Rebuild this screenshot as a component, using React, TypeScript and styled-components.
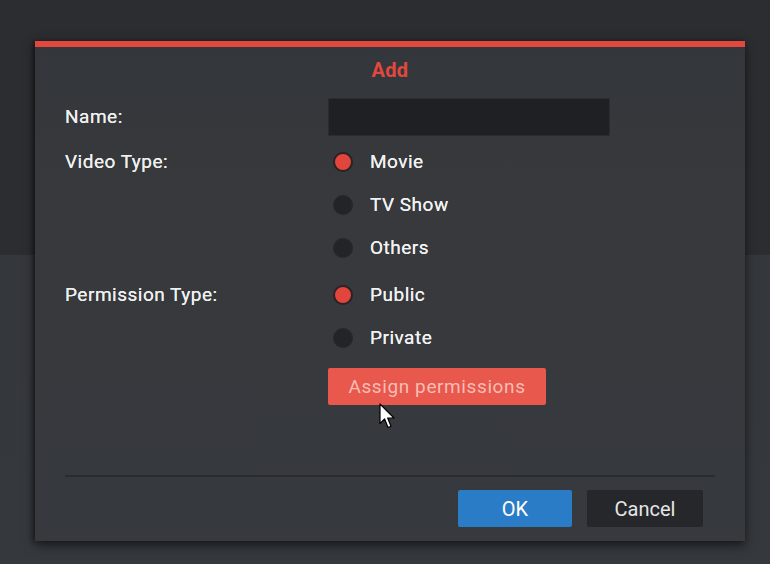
import styled, { createGlobalStyle } from "styled-components";

const GlobalStyle = createGlobalStyle`
  html, body {
    margin: 0;
    padding: 0;
    height: 100%;
  }
  body {
    font-family: Roboto, "Liberation Sans", sans-serif;
    background: linear-gradient(#2b2d31 0, #2b2d31 255px, #34373b 255px, #35383c 100%);
    overflow: hidden;
  }
`;

const Page = styled.div`
  width: 770px;
  height: 564px;
  padding: 41px 0 0 35px;
  box-sizing: border-box;
`;

const Dialog = styled.div`
  width: 710px;
  height: 500px;
  box-sizing: border-box;
  background: linear-gradient(#33363a, #37393d 30%, #36393d);
  border-top: 6px solid #e2483d;
  box-shadow: 0 4px 10px rgba(0, 0, 0, 0.55), -2px 0 4px rgba(0, 0, 0, 0.35);
  display: flex;
  flex-direction: column;
`;

const Title = styled.h2`
  margin: 0;
  height: 45px;
  display: flex;
  align-items: center;
  justify-content: center;
  font-size: 20px;
  font-weight: 700;
  color: #e2483d;
  letter-spacing: 0.3px;
`;

const Form = styled.div`
  display: grid;
  grid-template-columns: 263px 1fr;
  row-gap: 4px;
  padding: 6px 30px 0 30px;
`;

const Label = styled.div<{ $h: number }>`
  height: ${p => p.$h}px;
  line-height: ${p => p.$h}px;
  font-size: 19px;
  letter-spacing: 0.5px;
  color: #f0f0f0;
  text-shadow: 0 0 0.4px #f0f0f0;
`;

const Group = styled.div`
  display: flex;
  flex-direction: column;
`;

const TextInput = styled.input`
  width: 282px;
  height: 38px;
  box-sizing: border-box;
  margin: 0;
  background: #1f2023;
  border: 1px solid #2a2c2f;
  outline: none;
  color: #e8e8e8;
`;

const RadioRow = styled.label`
  height: 43px;
  display: flex;
  align-items: center;
  gap: 17px;
  padding-left: 5px;
  font-size: 19px;
  letter-spacing: 0.5px;
  color: #f2f2f2;
  text-shadow: 0 0 0.4px #f2f2f2;
`;

const Dot = styled.span<{ $on: boolean }>`
  width: 20px;
  height: 20px;
  border-radius: 50%;
  box-sizing: border-box;
  background: ${p => (p.$on ? "#e2453b" : "#222427")};
  border: 2px solid ${p => (p.$on ? "#2a2224" : "#24262a")};
`;

const ActionCell = styled.div`
  grid-column: 2;
  padding-top: 5px;
`;

const AssignButton = styled.button`
  position: relative;
  width: 218px;
  height: 37px;
  border: none;
  border-radius: 2px;
  background: #e8584c;
  color: #f6bdb4;
  font-family: inherit;
  font-size: 19px;
  letter-spacing: 0.6px;
  padding: 0;
`;

const Cursor = styled.svg`
  position: absolute;
  left: 51px;
  top: 35px;
`;

const Spacer = styled.div`
  flex: 1;
`;

const Footer = styled.div`
  margin: 0 30px;
  border-top: 2px solid #2a2c30;
  padding: 13px 12px 14px 0;
  display: flex;
  justify-content: flex-end;
  gap: 15px;
`;

const FooterButton = styled.button<{ $primary?: boolean }>`
  width: ${p => (p.$primary ? 114 : 116)}px;
  height: 37px;
  border: none;
  border-radius: 2px;
  background: ${p => (p.$primary ? "#2b7cc6" : "#25272a")};
  color: ${p => (p.$primary ? "#ffffff" : "#e6e6e6")};
  font-family: inherit;
  font-size: 20px;
  padding: 0;
`;

function Radio({ label, checked }: { label: string; checked?: boolean }) {
  return (
    <RadioRow>
      <Dot $on={!!checked} />
      {label}
    </RadioRow>
  );
}

export default function App() {
  return (
    <>
      <GlobalStyle />
      <Page>
        <Dialog>
          <Title>Add</Title>
          <Form>
            <Label $h={38}>Name:</Label>
            <div>
              <TextInput type="text" />
            </div>

            <Label $h={43}>Video Type:</Label>
            <Group>
              <Radio label="Movie" checked />
              <Radio label="TV Show" />
              <Radio label="Others" />
            </Group>

            <Label $h={43}>Permission Type:</Label>
            <Group>
              <Radio label="Public" checked />
              <Radio label="Private" />
            </Group>

            <ActionCell>
              <AssignButton>
                Assign permissions
                <Cursor width="17" height="26" viewBox="0 0 17 26">
                  <path
                    d="M1 1 L1 20.5 L5.6 16 L9 24.5 L12 23.2 L8.7 15 L15 15 Z"
                    fill="#ffffff"
                    stroke="#000000"
                    strokeWidth="1.2"
                    strokeLinejoin="round"
                  />
                </Cursor>
              </AssignButton>
            </ActionCell>
          </Form>
          <Spacer />
          <Footer>
            <FooterButton $primary>OK</FooterButton>
            <FooterButton>Cancel</FooterButton>
          </Footer>
        </Dialog>
      </Page>
    </>
  );
}
